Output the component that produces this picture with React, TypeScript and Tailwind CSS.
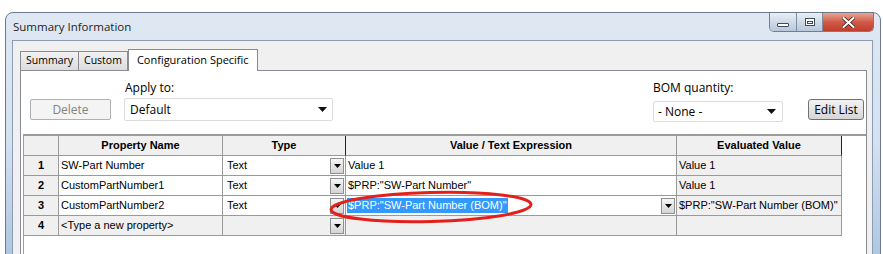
import React from 'react';

const ui = { fontFamily: '"Open Sans", "Noto Sans", sans-serif' };
const grid = { fontFamily: '"Liberation Sans", Arial, sans-serif' };

const DropButton: React.FC = () => (
  <div className="w-[14px] h-[16px] border border-[#8e8f8f] bg-gradient-to-b from-[#f6f6f6] to-[#d4d4d4] flex items-center justify-center shrink-0">
    <svg width="7" height="4" viewBox="0 0 7 4">
      <path d="M0 0h7L3.5 4z" fill="#000" />
    </svg>
  </div>
);

const ComboArrow: React.FC = () => (
  <svg width="9" height="5" viewBox="0 0 9 5">
    <path d="M0 0h9L4.5 5z" fill="#111" />
  </svg>
);

type Row = { n: number; name: string; type: string; value: string; evaluated: string; isNew?: boolean; selected?: boolean };

const rows: Row[] = [
  { n: 1, name: 'SW-Part Number', type: 'Text', value: 'Value 1', evaluated: 'Value 1' },
  { n: 2, name: 'CustomPartNumber1', type: 'Text', value: '$PRP:"SW-Part Number"', evaluated: 'Value 1' },
  { n: 3, name: 'CustomPartNumber2', type: 'Text', value: '$PRP:"SW-Part Number (BOM)"', evaluated: '$PRP:"SW-Part Number (BOM)"', selected: true },
  { n: 4, name: '<Type a new property>', type: '', value: '', evaluated: '', isNew: true },
];

const cell = 'h-[20px] border-r border-b border-[#9a9a9a] flex items-center';

export default function App() {
  return (
    <div className="w-[883px] h-[254px] bg-white overflow-hidden relative pt-[12px] pl-[5px] text-black">
      {/* window */}
      <div className="w-[876px] h-[260px] rounded-t-[8px] border border-[#6c7a8c] bg-gradient-to-b from-[#dfe8f3] via-[#d3e1f1] to-[#a9c3e0] flex flex-col">
        {/* title bar */}
        <div className="h-[27px] flex items-start justify-between shrink-0">
          <div className="pl-[7px] pt-[5px] text-[11.5px] text-[#1e1e1e]" style={ui}>Summary Information</div>
          <div className="flex mr-[6px] h-[19px] rounded-b-[5px] border border-t-0 border-[#6f7e93] overflow-hidden">
            <div className="w-[27px] h-full bg-gradient-to-b from-[#e8eef6] to-[#b8c7da] border-r border-[#7d8ca0] flex items-center justify-center">
              <div className="w-[12px] h-[4px] mt-[5px] border border-[#3e4a5b] bg-white rounded-[1px]" />
            </div>
            <div className="w-[26px] h-full bg-gradient-to-b from-[#e8eef6] to-[#b8c7da] border-r border-[#7d8ca0] flex items-center justify-center">
              <div className="w-[10px] h-[8px] border border-[#3e4a5b] bg-white flex items-center justify-center">
                <div className="w-[6px] h-[3px] border border-[#3e4a5b]" />
              </div>
            </div>
            <div className="w-[50px] h-full bg-gradient-to-b from-[#e9a596] via-[#cf5b48] to-[#c23d2a] flex items-center justify-center">
              <svg width="13" height="11" viewBox="0 0 13 11">
                <path d="M1.5 1l10 9M11.5 1l-10 9" stroke="#3c1510" strokeWidth="3.6" strokeLinecap="round" />
                <path d="M1.5 1l10 9M11.5 1l-10 9" stroke="#fff" strokeWidth="2.2" strokeLinecap="round" />
              </svg>
            </div>
          </div>
        </div>

        {/* client area */}
        <div className="ml-[6px] mr-[7px] flex-1 bg-[#f0f0f0] border border-[#8d9cb0] flex flex-col pl-[7px] pr-[5px] pt-[7px]">
          {/* tabs */}
          <div className="flex items-end h-[22px] text-[10.5px]" style={ui}>
            <div className="h-[19px] px-[5px] border border-b-0 border-[#898c95] bg-gradient-to-b from-[#f2f2f2] to-[#dcdcdc] flex items-center">Summary</div>
            <div className="h-[19px] px-[5px] border border-b-0 border-l-0 border-[#898c95] bg-gradient-to-b from-[#f2f2f2] to-[#dcdcdc] flex items-center">Custom</div>
            <div className="h-[22px] px-[8px] border border-b-0 border-[#898c95] bg-white flex items-center relative top-[1px] z-10 text-[11px]">Configuration Specific</div>
          </div>

          {/* tab panel */}
          <div className="flex-1 bg-white border border-[#898c95] flex flex-col">
            <div className="flex items-start h-[63px] text-[12px]" style={ui}>
              <div className="ml-[9px] mt-[28px] w-[81px] h-[21px] rounded-[2px] border border-[#adb2b5] bg-[#f4f4f4] text-[#838383] flex items-center justify-center">Delete</div>
              <div className="ml-[13px] mt-[8px] flex flex-col">
                <div className="h-[18px] leading-[18px] pl-[1px]">Apply to:</div>
                <div className="mt-[1px] w-[209px] h-[23px] border border-[#dcdcdc] rounded-[2px] bg-white flex items-center justify-between pl-[5px] pr-[5px]">
                  <span>Default</span>
                  <ComboArrow />
                </div>
              </div>
              <div className="ml-[320px] mt-[8px] flex flex-col">
                <div className="h-[18px] leading-[18px]">BOM quantity:</div>
                <div className="mt-[4px] w-[130px] h-[21px] border border-[#dcdcdc] rounded-[2px] bg-white flex items-center justify-between pl-[4px] pr-[6px]">
                  <span>- None -</span>
                  <ComboArrow />
                </div>
              </div>
              <div className="ml-[25px] mt-[28px] w-[56px] h-[21px] rounded-[3px] border border-[#707070] bg-gradient-to-b from-[#f2f2f2] to-[#d6d6d6] flex items-center justify-center">Edit List</div>
            </div>

            {/* property grid */}
            <div className="ml-[2px] flex-1 border-l border-t-2 border-[#9c9c9c] bg-white text-[11px]" style={grid}>
              <div className="grid grid-cols-[35px_164px_123px_331px_165px]">
                <div className={`${cell} bg-[#f0f0f0]`} />
                <div className={`${cell} bg-[#f0f0f0] justify-center font-bold`}>Property Name</div>
                <div className={`${cell} bg-[#f0f0f0] justify-center font-bold border-r-[#222]`}>Type</div>
                <div className={`${cell} bg-[#f0f0f0] justify-center font-bold`}>Value / Text Expression</div>
                <div className={`${cell} bg-[#f0f0f0] justify-center font-bold border-r-[#222]`}>Evaluated Value</div>

                {rows.map(r => (
                  <React.Fragment key={r.n}>
                    <div className={`${cell} bg-[#f0f0f0] justify-center font-bold`}>{r.n}</div>
                    <div className={`${cell} pl-[2px] ${r.isNew ? 'bg-[#f0f0f0]' : 'bg-white'}`}>{r.name}</div>
                    <div className={`${cell} pl-[4px] pr-[1px] justify-between ${r.isNew ? 'bg-[#f0f0f0]' : 'bg-white'}`}>
                      <span>{r.type}</span>
                      <DropButton />
                    </div>
                    <div className={`${cell} pl-[1px] pr-[1px] justify-between ${r.isNew ? 'bg-[#f0f0f0]' : 'bg-white'}`}>
                      {r.selected ? (
                        <span className="bg-[#3399ff] text-white px-[1px] leading-[15px]">{r.value}</span>
                      ) : (
                        <span className="pl-[1px]">{r.value}</span>
                      )}
                      {r.selected && <DropButton />}
                    </div>
                    <div className={`${cell} pl-[2px] bg-[#f0f0f0]`}>{r.evaluated}</div>
                  </React.Fragment>
                ))}
              </div>
            </div>
          </div>
        </div>
      </div>

      {/* red annotation ellipse */}
      <svg className="absolute left-[327px] top-[188px]" width="208" height="38" viewBox="0 0 208 38">
        <ellipse cx="104" cy="19" rx="100" ry="14.5" transform="rotate(-1.5 104 19)" fill="none" stroke="#e3211c" strokeWidth="3" />
      </svg>
    </div>
  );
}
